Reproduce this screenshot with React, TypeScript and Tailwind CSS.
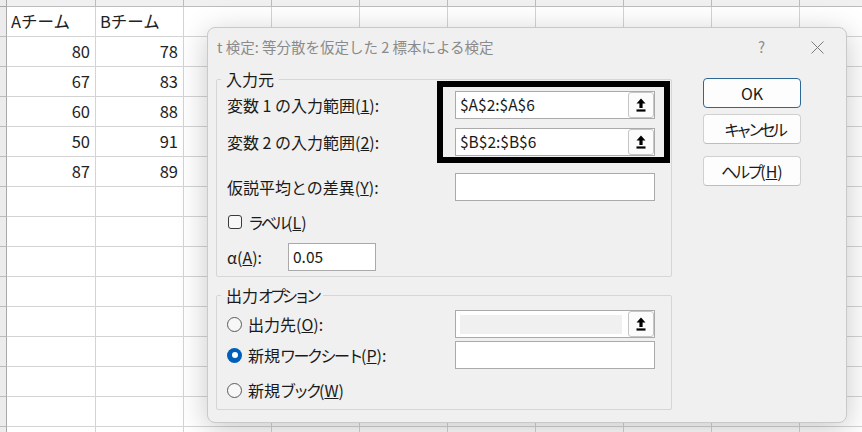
import React from 'react';

const jp = "font-['Noto_Sans_CJK_JP','Noto_Sans',sans-serif]";

const sheetRows: [string, string][] = [
  ['Aチーム', 'Bチーム'],
  ['80', '78'],
  ['67', '83'],
  ['60', '88'],
  ['50', '91'],
  ['87', '89'],
];

function Sheet() {
  const rows = Array.from({ length: 15 });
  const cols = Array.from({ length: 10 });
  return (
    <div className="flex flex-col">
      <div className="flex h-[7px]">
        <div className="w-[7px] shrink-0 bg-[#ececec] border-r border-b border-[#a8a8a8]" />
        {cols.map((_, c) => (
          <div
            key={c}
            className={`${c === 0 ? 'w-[89px]' : 'w-[88px]'} shrink-0 bg-[#f0f0f0] border-r border-b border-[#bcbcbc]`}
          />
        ))}
      </div>
      {rows.map((_, r) => (
        <div key={r} className="flex h-[30px]">
          <div className="w-[7px] shrink-0 bg-[#ececec] border-r border-b border-r-[#a8a8a8] border-b-[#bcbcbc]" />
          {cols.map((_, c) => {
            const val = sheetRows[r]?.[c] ?? '';
            const isHead = r === 0;
            return (
              <div
                key={c}
                className={`${c === 0 ? 'w-[89px]' : 'w-[88px]'} shrink-0 border-r border-b border-[#d4d4d4] flex items-center text-[16.5px] text-[#222] ${
                  isHead ? 'justify-start pl-[4px]' : 'justify-end pr-[5px]'
                }`}
              >
                {val}
              </div>
            );
          })}
        </div>
      ))}
    </div>
  );
}

function UploadIcon() {
  return (
    <svg width="10" height="14" viewBox="0 0 10 14">
      <path d="M5 0.5 L9.5 5.6 L6.6 5.6 L6.6 10 L3.4 10 L3.4 5.6 L0.5 5.6 Z" fill="#000" />
      <rect x="0.5" y="11.4" width="9" height="2.2" fill="#000" />
    </svg>
  );
}

function RangeInput({ value, disabled }: { value?: string; disabled?: boolean }) {
  return (
    <div className="flex items-center w-[200px] h-[28px] border border-[#aaaaaa] bg-white pl-[4px]">
      <div
        className={`w-[162px] h-[19px] flex items-center text-[15.5px] text-[#1a1a1a] whitespace-nowrap ${
          disabled ? 'bg-[#f0f0f0]' : ''
        }`}
      >
        {value}
      </div>
      <div className="ml-[6px] w-[26px] h-[26px] rounded-[3px] border border-[#c6c6c6] bg-[#fbfbfb] flex items-center justify-center">
        <UploadIcon />
      </div>
    </div>
  );
}

function TextInput({ value, w = 'w-[200px]' }: { value?: string; w?: string }) {
  return (
    <div className={`${w} h-[28px] border border-[#aaaaaa] bg-white pl-[4px] flex items-center text-[15.5px] text-[#1a1a1a]`}>
      {value}
    </div>
  );
}

function Radio({ checked }: { checked?: boolean }) {
  return checked ? (
    <div className="w-[15px] h-[15px] rounded-full bg-[#005fb8] flex items-center justify-center">
      <div className="w-[6px] h-[6px] rounded-full bg-white" />
    </div>
  ) : (
    <div className="w-[15px] h-[15px] rounded-full border border-[#5a5a5a] bg-[#f7f7f7]" />
  );
}

function Btn({ children, primary }: { children: React.ReactNode; primary?: boolean }) {
  return (
    <div
      className={`w-[98px] h-[30px] rounded-[4px] bg-[#fdfdfd] flex items-center justify-center text-[16px] text-[#1a1a1a] ${
        primary ? 'border-[1.5px] border-[#2c6796]' : 'border border-[#d0d0d0] border-b-[#bdbdbd]'
      }`}
    >
      {children}
    </div>
  );
}

// katakana runs in the dialog font are narrower than Noto's full-width kana
const kana = 'tracking-[-3px]';

export default function App() {
  return (
    <div className={`relative w-[862px] h-[432px] overflow-hidden bg-white ${jp}`}>
      <Sheet />

      {/* dialog window */}
      <div className="absolute left-[207px] top-[27px] w-[640px] h-[396px] rounded-[8px] border border-[#c9c9c9] bg-[#f0f0f0] shadow-[0_6px_30px_rgba(0,0,0,0.22)] flex flex-col">
        <div className="h-[38px] flex items-center pl-[9px] pr-[22px] shrink-0">
          <span className="text-[14.5px] text-[#8a8a8a]">t 検定: 等分散を仮定した 2 標本による検定</span>
          <span className="ml-auto text-[15px] text-[#8f8f8f]">?</span>
          <svg className="ml-[46px]" width="13" height="13" viewBox="0 0 13 13">
            <path d="M0.5 0.5 L12.5 12.5 M12.5 0.5 L0.5 12.5" stroke="#7c7c7c" strokeWidth="1" />
          </svg>
        </div>

        <div className="relative flex pl-[8px] pt-[5px] text-[16px] text-[#1a1a1a]">
          <div className="w-[456px] flex flex-col gap-[10px]">
            <fieldset className="border border-[#d6d6d6] rounded-[2px] m-0 px-[10px] pt-0 pb-[5px]">
              <legend className="-ml-[6px] px-[5px] leading-[16px]">入力元</legend>
              <div className="mt-[4px] h-[28px] flex items-center">
                <div className="w-[228px]">
                  変数 1 の入力範囲(<u>1</u>):
                </div>
                <RangeInput value="$A$2:$A$6" />
              </div>
              <div className="mt-[9px] h-[28px] flex items-center">
                <div className="w-[228px]">
                  変数 2 の入力範囲(<u>2</u>):
                </div>
                <RangeInput value="$B$2:$B$6" />
              </div>
              <div className="mt-[17px] h-[28px] flex items-center">
                <div className="w-[228px]">
                  仮説平均との差異(<u>Y</u>):
                </div>
                <TextInput />
              </div>
              <div className="mt-[11px] h-[20px] flex items-center">
                <div className="ml-[1px] w-[14px] h-[14px] rounded-[3px] border border-[#3a3a3a] bg-[#f7f7f7]" />
                <span className="ml-[6px]">
                  <span className="tracking-[-3px]">ラベル</span>(<u>L</u>)
                </span>
              </div>
              <div className="mt-[11px] h-[28px] flex items-center">
                <div className="w-[61px]">
                  α(<u>A</u>):
                </div>
                <TextInput value="0.05" w="w-[88px]" />
              </div>
            </fieldset>

            <fieldset className="border border-[#d6d6d6] rounded-[2px] m-0 px-[10px] pt-0 pb-[9px]">
              <legend className="-ml-[6px] px-[5px] leading-[16px]">
                出力<span className="tracking-[-4px]">オプション</span>
              </legend>
              <div className="mt-[7px] h-[28px] flex items-center">
                <div className="w-[228px] flex items-center">
                  <Radio />
                  <span className="ml-[6px]">
                    出力先(<u>O</u>):
                  </span>
                </div>
                <RangeInput disabled />
              </div>
              <div className="mt-[3px] h-[28px] flex items-center">
                <div className="w-[228px] flex items-center">
                  <Radio checked />
                  <span className="ml-[6px]">
                    新規<span className="tracking-[-2.5px]">ワークシート</span>(<u>P</u>):
                  </span>
                </div>
                <TextInput />
              </div>
              <div className="mt-[11px] h-[20px] flex items-center">
                <Radio />
                <span className="ml-[6px]">
                  新規<span className={kana}>ブック</span>(<u>W</u>)
                </span>
              </div>
            </fieldset>
          </div>

          <div className="ml-[31px] pt-[7px] flex flex-col">
            <Btn primary>OK</Btn>
            <div className="mt-[6px]">
              <Btn>
                <span className="tracking-[-4px] mr-[-4px]">キャンセル</span>
              </Btn>
            </div>
            <div className="mt-[12px]">
              <Btn>
                <span className="tracking-[-3px]">ヘルプ</span>(<u>H</u>)
              </Btn>
            </div>
          </div>

          {/* black highlight frame drawn over the two range inputs */}
          <div className="pointer-events-none absolute left-[229px] top-[15px] w-[233px] h-[82px] border-[6px] border-black" />
        </div>
      </div>
    </div>
  );
}
